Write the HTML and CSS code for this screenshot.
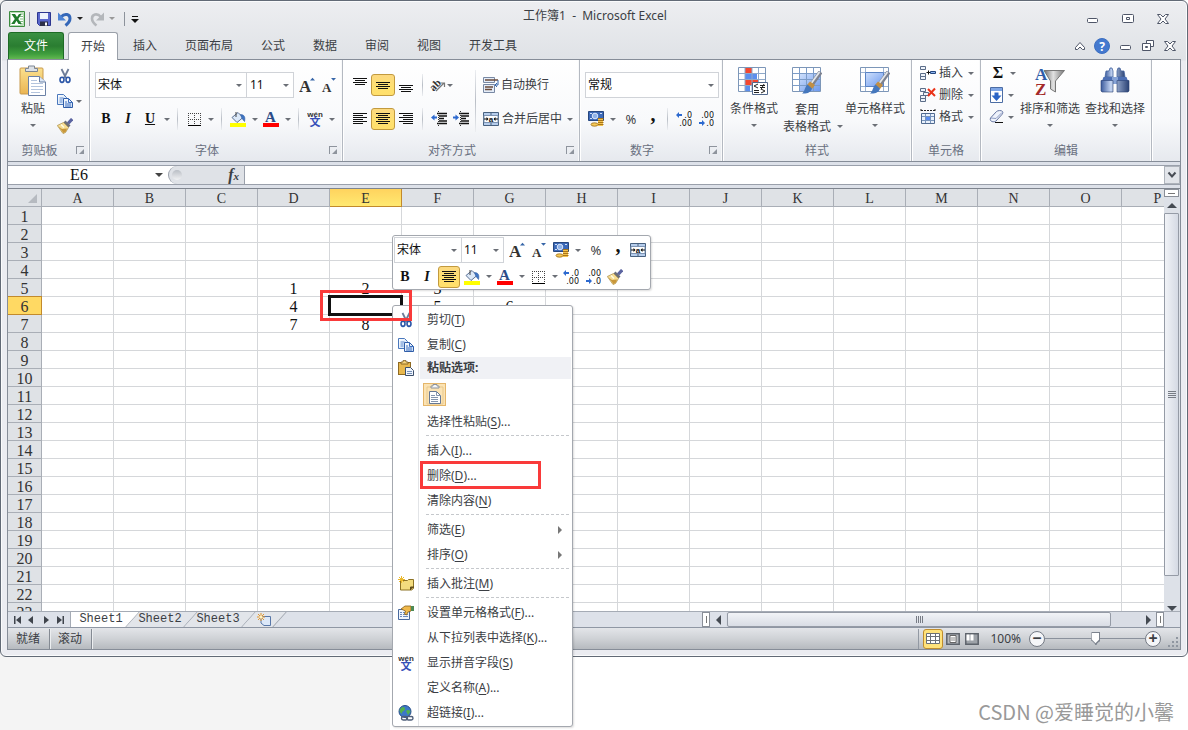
FILE: index.html
```html
<!DOCTYPE html>
<html lang="zh-CN">
<head>
<meta charset="utf-8">
<title>工作簿1 - Microsoft Excel</title>
<meta name="viewport" content="width=device-width, initial-scale=1">
<link rel="stylesheet" href="styles.css">
</head>
<body>
<svg class="defs" aria-hidden="true">
  <defs>
    <linearGradient id="gold" x2="0" y2="1"><stop stop-color="#fbe08d"/><stop offset="1" stop-color="#eab553"/></linearGradient>
    <linearGradient id="page" x2="1" y2="1"><stop stop-color="#fff"/><stop offset="1" stop-color="#c9dcf3"/></linearGradient>
    <linearGradient id="blue" x2="1" y2="1"><stop stop-color="#cfe0fb"/><stop offset="1" stop-color="#6d9af0"/></linearGradient>
    <linearGradient id="steel" x2="1" y2="0"><stop stop-color="#3a5a9c"/><stop offset=".35" stop-color="#c3d4f2"/><stop offset="1" stop-color="#2a4274"/></linearGradient>
    <linearGradient id="funnel" x2="1" y2="0"><stop stop-color="#6d6d6d"/><stop offset=".45" stop-color="#e2e2e2"/><stop offset="1" stop-color="#777"/></linearGradient>
    <symbol id="cut" viewBox="0 0 16 16"><path d="M4.500 1 9 10M11.500 1 7 10" stroke="#6d7c98" stroke-width="1.800" fill="none"/><ellipse cx="5" cy="11.800" rx="2" ry="2.600" fill="none" stroke="#2c57a8" stroke-width="1.600"/><ellipse cx="11" cy="11.800" rx="2" ry="2.600" fill="none" stroke="#2c57a8" stroke-width="1.600"/></symbol>
    <symbol id="copy" viewBox="0 0 16 16"><path d="M.5 1.500h6l3 3v7h-9z" fill="url(#page)" stroke="#4a78bd"/><path d="M2.500 5h4M2.500 7h3M2.500 9h3" stroke="#5c8bd0"/><path d="M6.500 5.500h5l4 4v5h-9z" fill="url(#page)" stroke="#2f5da8"/><path d="M11.500 5.500v4h4M8 9h2M8 11h6M8 13h6" stroke="#3c6fc0" fill="none"/></symbol>
    <symbol id="brush" viewBox="0 0 16 16"><path d="M15.200 1 11 5.500" stroke="#5b64a0" stroke-width="3.200"/><path d="m8.500 2.500 5 5-2 2-5-5z" fill="#6c6f78"/><path d="M6.500 4.500 11.500 9.500 8.500 14.500 6 15.500.3 7.500z" fill="#f5dc93" stroke="#a88a42" stroke-width=".7"/><path d="m1.500 8.500 5 6.500 2.500-1.500 1-3-5 .5z" fill="#c8973a"/><path d="m4 6.500 3 3" stroke="#fffbe4" stroke-width="1.500"/></symbol>
    <symbol id="clip" viewBox="0 0 28 32"><rect x="1" y="3" width="23" height="26" rx="1" fill="url(#gold)" stroke="#c99a4c"/><path d="M6.500 6.500V3.500h3V1h6v2.500h3v3z" fill="#dce1e7" stroke="#7d8692"/><path d="M9.500 11.500h11l6 5.500v13.500h-17z" fill="#fff" stroke="#6b81a6"/><path d="M20.500 11.500V17h6" fill="#dce7f5" stroke="#6b81a6"/><path d="M12 18.500h12M12 21.500h12M12 24.500h12M12 27.500h9M12 15.500h6" stroke="#b3c4dd"/></symbol>
    <symbol id="clip16" viewBox="0 0 16 16"><rect x=".5" y="2.500" width="12" height="12" fill="#e8b84e" stroke="#8f6a22"/><path d="M3 4V2h2V.6h3V2h2v2z" fill="#f5d37a" stroke="#76571a" stroke-width=".8"/><path d="M7.500 7.500h5l3 3v5h-8z" fill="#eef4fc" stroke="#3d4f6b"/><path d="M9 11.500h5M9 13.500h5" stroke="#7690b8"/></symbol>
    <symbol id="grow" viewBox="0 0 16 16"><text x="0" y="15" class="serif-a">A</text><path d="M11 3.500h5L13.500.8z" fill="#3766a8"/></symbol>
    <symbol id="shrink" viewBox="0 0 16 16"><text x="1" y="15" class="serif-a small">A</text><path d="M10 1h5l-2.500 2.800z" fill="#3766a8"/></symbol>
    <symbol id="border" viewBox="0 0 16 16"><path d="M2.500 2v11M8.500 2v11M14.500 2v11M2 2.500h13M2 8.500h13" stroke="#444" stroke-dasharray="1 1"/><path d="M2 14.500h13" stroke="#000"/></symbol>
    <symbol id="fill" viewBox="0 0 16 16"><path d="m2 6.500 6-5 5 5-6 5z" fill="#dbe8f8" stroke="#5a7094"/><path d="M6 1v5" stroke="#444"/><path d="M10.500 3.500c4 0 5 3 4 7l-2.500-3z" fill="#3f74c2" stroke="#2e5ca5" stroke-width=".6"/><path d="M0 12h16v4H0z" fill="#ff0"/></symbol>
    <symbol id="color" viewBox="0 0 16 16"><text x="2" y="11" class="serif-a blue">A</text><path d="M0 12h16v4H0z" fill="#f00"/></symbol>
    <symbol id="wen" viewBox="0 0 16 16"><text x="8" y="6" text-anchor="middle" class="wen-top">wén</text><text x="8" y="15" text-anchor="middle" class="wen-bottom">文</text></symbol>
    <symbol id="al" viewBox="0 0 16 16"><path d="M1 2.500h14M1 4.500h10M1 6.500h14M1 8.500h10M1 10.500h14M1 12.500h10" stroke="#111"/></symbol>
    <symbol id="ac" viewBox="0 0 16 16"><path d="M1 2.500h14M3 4.500h10M1 6.500h14M3 8.500h10M1 10.500h14M3 12.500h10" stroke="#111"/></symbol>
    <symbol id="ar" viewBox="0 0 16 16"><path d="M1 2.500h14M5 4.500h10M1 6.500h14M5 8.500h10M1 10.500h14M5 12.500h10" stroke="#111"/></symbol>
    <symbol id="at" viewBox="0 0 16 16"><path d="M1 1.500h14M3 3.500h10M1 5.500h14M3 7.500h10" stroke="#111"/></symbol>
    <symbol id="am" viewBox="0 0 16 16"><path d="M1 5.500h14M3 7.500h10M1 9.500h14M3 11.500h10" stroke="#111"/></symbol>
    <symbol id="ab" viewBox="0 0 16 16"><path d="M1 8.500h14M3 10.500h10M1 12.500h14M3 14.500h10" stroke="#111"/></symbol>
    <symbol id="orient" viewBox="0 0 16 16"><text x="0" y="12" transform="rotate(-45 5 9)" class="orient-ab">ab</text><path d="m6 14 8-8M10.500 6h4v4" stroke="#777" fill="none" stroke-width="1.200"/></symbol>
    <symbol id="outdent" viewBox="0 0 16 16"><path d="M6 2.500h10M8 5h8M8 7.500h5M8 10h8M6 12.500h10" stroke="#111" stroke-width="1.300"/><path d="M7.500 0v16" stroke="#333" stroke-dasharray="1 1"/><path d="M0 6.500 3.500 3.500v2H6v2H3.500v2z" fill="#2c69cf"/></symbol>
    <symbol id="indent" viewBox="0 0 16 16"><path d="M6 2.500h10M8 5h8M8 7.500h5M8 10h8M6 12.500h10" stroke="#111" stroke-width="1.300"/><path d="M7.500 0v16" stroke="#333" stroke-dasharray="1 1"/><path d="M6 6.500 2.500 3.500v2H0v2h2.500v2z" fill="#2c69cf"/></symbol>
    <symbol id="wrap" viewBox="0 0 16 16"><path d="M.5.500h11v5H.500zM.5 7.500h11v8H.500z" fill="#e4edf9" stroke="#7888a3"/><path d="M2 3h13M2 10h8M2 12.500h7" stroke="#6b4b3b" stroke-width="1.300"/><path d="M15 3v5h-3M14 6l-2 2 2 2" stroke="#3767ad" fill="none"/></symbol>
    <symbol id="merge" viewBox="0 0 16 16"><path d="M.5 1.500h15v13H.500z" fill="#b6cdec" stroke="#47607f"/><path d="M8 1v3M8 12v3" stroke="#47607f"/><path d="M1 4.500h14v7H1z" fill="#fff" stroke="#7d94b4"/><text x="8" y="10.500" text-anchor="middle" class="merge-a">a</text><path d="M1 8h4M11 8h4" stroke="#111"/><path d="m5.500 8-2-2v4zM10.500 8l2-2v4z" fill="#111"/></symbol>
    <symbol id="money" viewBox="0 0 16 16"><path d="M.5.500h15v9H.500z" fill="#3c69b8" stroke="#27477f"/><circle cx="7" cy="5" r="2.800" fill="#8fb2e8" stroke="#dbe7fa"/><path d="M2 2.500h2M12 2.500h2M2 7.500h2" stroke="#cfdff7"/><path d="M10 7h5v8h-5z" fill="#f4c44e"/><path d="M10 7.500h5.500M10 9.500h5.500M10 11.500h5.500M10 13.500h5.500" stroke="#a8751a"/><ellipse cx="6.500" cy="13.500" rx="3.500" ry="1.700" fill="#f5c958" stroke="#9c6b12" stroke-width=".8"/></symbol>
    <symbol id="dinc" viewBox="0 0 16 16"><text x="16" y="7" text-anchor="end" class="dec">.0</text><text x="16" y="15" text-anchor="end" class="dec">.00</text><path d="m0 4 3-3v2h3v2H3v2z" fill="#2c69cf"/></symbol>
    <symbol id="ddec" viewBox="0 0 16 16"><text x="16" y="7" text-anchor="end" class="dec">.00</text><text x="16" y="15" text-anchor="end" class="dec">.0</text><path d="m7 12-3-3v2H1v2h3v2z" fill="#2c69cf"/></symbol>
    <symbol id="paintbrush" viewBox="0 0 20 24"><path d="M18.500 1 10 13" stroke="#7d8290" stroke-width="4.500"/><path d="m17.500 1-8 11" stroke="#e4e7eb" stroke-width="1.800"/><path d="m8 10.500 5 3.500-3 4-5-4z" fill="#c28f45"/><path d="M5.500 13.500 10 17.500c-1 4-5 5.500-10 5 3-2 2.500-6.500 5.500-9z" fill="#4577bd"/></symbol>
  </defs>
</svg>

<div class="window">
  <header class="titlebar">
    <div class="quick">
      <svg class="i16" viewBox="0 0 16 16"><path d="M.5.500h15v15H.500z" fill="#fff" stroke="#3c8c3f"/><path d="M1.500 1.500h13v13h-13z" fill="none" stroke="#b6dab4"/><path d="M11 3h3M11 5.500h3M11 8h3M11 10.500h3M11 13h3" stroke="#7fb981"/><path d="M2.500 3H6l2 3 2-3h2.500L9.300 8l3.500 5H9.500L7.500 9.800 5.500 13H2.200l3.600-5z" fill="#1f7a2b"/></svg>
      <span class="qsep"></span>
      <button class="q save" aria-label="保存"><svg class="i16" viewBox="0 0 16 16"><path d="M1.500 1.500h13v13h-11l-2-2z" fill="#5a67cc" stroke="#2c3690"/><path d="M4 2h8v6H4z" fill="#eef3fc"/><path d="M4 10.500h8V15H4z" fill="#2d3048"/><path d="M9 11.500h2v3H9z" fill="#fff"/></svg></button>
      <button class="q dd" aria-label="撤消"><svg class="i16" viewBox="0 0 16 16"><path d="M4 6c4-4.500 9-2.500 9 1.500 0 3-2 5-4.500 7" stroke="#3467b8" stroke-width="3" fill="none"/><path d="M1 1.500v8h8z" fill="#4d83d4"/></svg></button>
      <button class="q dd dim" aria-label="恢复"><svg class="i16" viewBox="0 0 16 16"><path d="M12 6c-4-4.500-9-2.500-9 1.500 0 3 2 5 4.500 7" stroke="#b4b7bb" stroke-width="2.600" fill="none"/><path d="M15 1.500v8H7z" fill="#b4b7bb"/></svg></button>
      <span class="qsep"></span>
      <button class="q narrow" aria-label="自定义快速访问工具栏"><svg width="8" height="8" viewBox="0 0 8 8"><path d="M1 1.500h6" stroke="#111"/><path d="M0 4h8L4 8z" fill="#111"/></svg></button>
    </div>
    <h1>工作簿1&nbsp; -&nbsp; Microsoft Excel</h1>
    <div class="winctl">
      <button aria-label="最小化"><svg width="12" height="12" viewBox="0 0 12 12"><rect x=".5" y="5.500" width="10" height="4" rx="1" class="ctl"/></svg></button>
      <button aria-label="最大化"><svg width="12" height="12" viewBox="0 0 12 12"><rect x=".5" y="1.500" width="11" height="8" rx="1" class="ctl"/><path d="M4.500 4.500h3v2h-3z" class="ctl"/></svg></button>
      <button aria-label="关闭"><svg width="12" height="12" viewBox="0 0 12 12"><path d="M.5 1.500h3L6 4l2.500-2.500h3L8 6l3.500 4.500h-3L6 8l-2.500 2.500h-3L4 6z" class="ctl"/></svg></button>
    </div>
  </header>

  <nav class="tabs">
    <button class="tab file">文件</button>
    <button class="tab active">开始</button>
    <button class="tab">插入</button>
    <button class="tab">页面布局</button>
    <button class="tab">公式</button>
    <button class="tab">数据</button>
    <button class="tab">审阅</button>
    <button class="tab">视图</button>
    <button class="tab">开发工具</button>
    <div class="bookctl">
      <button aria-label="功能区最小化"><svg width="10" height="12" viewBox="0 0 10 12"><path d="M.5 7.500 5 2.500l4.500 5v2h-2L5 7 2.500 9.500h-2z" class="ctl"/></svg></button>
      <button aria-label="帮助"><svg width="16" height="16" viewBox="0 0 16 16"><circle cx="8" cy="8" r="7.500" fill="#4479cf" stroke="#3c6fc0"/><text x="8" y="12.500" text-anchor="middle" class="help">?</text></svg></button>
      <button aria-label="最小化工作簿"><svg width="12" height="12" viewBox="0 0 12 12"><rect x=".5" y="5.500" width="10" height="4" rx="1" class="ctl"/></svg></button>
      <button aria-label="还原工作簿"><svg width="12" height="12" viewBox="0 0 12 12"><path d="M4.500.500h7v6h-7z" class="ctl"/><path d="M.5 3.500h8v7h-8z" class="ctl"/><path d="M3.500 6.500h2v1h-2z" class="ctl"/></svg></button>
      <button aria-label="关闭工作簿"><svg width="12" height="12" viewBox="0 0 12 12"><path d="M.5 1.500h3L6 4l2.500-2.500h3L8 6l3.500 4.500h-3L6 8l-2.500 2.500h-3L4 6z" class="ctl"/></svg></button>
    </div>
  </nav>

  <main class="workbench">
    <div class="ribbon">
      <section class="group g-clip">
        <div class="tools">
          <button class="big"><svg width="28" height="32"><use href="#clip"/></svg><span>粘贴</span><i class="arrow"></i></button>
          <div class="stack clipcol">
            <button class="tb" aria-label="剪切"><svg class="i16"><use href="#cut"/></svg></button>
            <button class="tb dd" aria-label="复制"><svg class="i16"><use href="#copy"/></svg></button>
            <button class="tb" aria-label="格式刷"><svg class="i16"><use href="#brush"/></svg></button>
          </div>
        </div>
        <h2>剪贴板</h2><button class="launcher" aria-label="剪贴板选项"></button>
      </section>

      <section class="group g-font">
        <div class="tools rows">
          <div class="row">
            <span class="pick wide"><select aria-label="字体"><option>宋体</option></select></span>
            <span class="pick size"><select aria-label="字号"><option>11</option></select></span>
            <button class="tb" aria-label="增大字号"><svg class="i16"><use href="#grow"/></svg></button>
            <button class="tb" aria-label="减小字号"><svg class="i16"><use href="#shrink"/></svg></button>
          </div>
          <div class="row">
            <button class="tb b">B</button><button class="tb it">I</button><button class="tb b dd"><u>U</u></button>
            <span class="sep"></span>
            <button class="tb dd" aria-label="边框"><svg class="i16"><use href="#border"/></svg></button>
            <span class="sep"></span>
            <button class="tb dd" aria-label="填充颜色"><svg class="i16"><use href="#fill"/></svg></button>
            <button class="tb dd" aria-label="字体颜色"><svg class="i16"><use href="#color"/></svg></button>
            <span class="sep"></span>
            <button class="tb dd" aria-label="拼音"><svg class="i16"><use href="#wen"/></svg></button>
          </div>
        </div>
        <h2>字体</h2><button class="launcher" aria-label="字体选项"></button>
      </section>

      <section class="group g-align">
        <div class="tools">
          <div class="rows">
            <div class="row">
              <button class="tb" aria-label="顶端对齐"><svg class="i16"><use href="#at"/></svg></button>
              <button class="tb on" aria-label="垂直居中"><svg class="i16"><use href="#am"/></svg></button>
              <button class="tb" aria-label="底端对齐"><svg class="i16"><use href="#ab"/></svg></button>
              <span class="sep"></span>
              <button class="tb dd snug" aria-label="方向"><svg class="i16"><use href="#orient"/></svg></button>
            </div>
            <div class="row">
              <button class="tb" aria-label="左对齐"><svg class="i16"><use href="#al"/></svg></button>
              <button class="tb on" aria-label="居中"><svg class="i16"><use href="#ac"/></svg></button>
              <button class="tb" aria-label="右对齐"><svg class="i16"><use href="#ar"/></svg></button>
              <span class="sep"></span>
              <button class="tb" aria-label="减少缩进"><svg class="i16"><use href="#outdent"/></svg></button>
              <button class="tb" aria-label="增加缩进"><svg class="i16"><use href="#indent"/></svg></button>
            </div>
          </div>
          <span class="sep tall"></span>
          <div class="rows">
            <div class="row"><button class="tb text"><svg class="i16"><use href="#wrap"/></svg>自动换行</button></div>
            <div class="row"><button class="tb text dd"><svg class="i16"><use href="#merge"/></svg>合并后居中</button></div>
          </div>
        </div>
        <h2>对齐方式</h2><button class="launcher" aria-label="对齐选项"></button>
      </section>

      <section class="group g-num">
        <div class="tools rows">
          <div class="row"><span class="pick full"><select aria-label="数字格式"><option>常规</option></select></span></div>
          <div class="row">
            <button class="tb dd" aria-label="会计数字格式"><svg class="i16"><use href="#money"/></svg></button>
            <button class="tb pct">%</button><button class="tb comma">,</button>
            <span class="sep"></span>
            <button class="tb" aria-label="增加小数位数"><svg class="i16"><use href="#dinc"/></svg></button>
            <button class="tb" aria-label="减少小数位数"><svg class="i16"><use href="#ddec"/></svg></button>
          </div>
        </div>
        <h2>数字</h2><button class="launcher" aria-label="数字选项"></button>
      </section>

      <section class="group g-style">
        <div class="tools">
          <button class="big"><svg width="32" height="32" viewBox="0 0 32 32"><path d="M.5 2.500h27v24h-27z" fill="#fff" stroke="#7c96b8"/><path d="M7 3h7v5H7z" fill="#f4472f"/><path d="M7 9h12v5H7z" fill="#5c8fee"/><path d="M7 15h13v5H7z" fill="#f4472f"/><path d="M7 21h5v5H7z" fill="#5c8fee"/><path d="M1 8.500h26M1 14.500h26M1 20.500h26M7 3v23M14 3v23M20.500 3v23" stroke="#8fa9c9" fill="none"/><path d="M14.500 17.500h15v12h-15z" fill="#fff" stroke="#51678a"/><path d="m20 19-4 2 4 2M22 20.500h5M22 22.500h5M26 19l-3 5.500M16 25.500h5M16 27.500h5M23 24l4 2-4 2" stroke="#222" fill="none"/></svg><span>条件格式</span><i class="arrow"></i></button>
          <button class="big"><svg width="32" height="32" viewBox="0 0 32 32"><path d="M1.500 2.500h28v24h-28z" fill="#fff" stroke="#7c96b8"/><path d="M8 9h21v17H8z" fill="url(#blue)"/><path d="M2 8.500h27M2 14.500h27M2 20.500h27M8.500 3v23M15.500 3v23M22.500 3v23" stroke="#7c9cc8" fill="none"/><use href="#paintbrush" x="11" y="6" width="20" height="24"/></svg><span>套用<br>表格格式<i class="arrow side"></i></span></button>
          <button class="big"><svg width="32" height="32" viewBox="0 0 32 32"><path d="M1.500 2.500h28v24h-28z" fill="#fff" stroke="#7c96b8"/><path d="M2 7.500h27M2 21.500h27M6.500 3v23M24.500 3v23" stroke="#9db4d2" fill="none"/><path d="M6.500 7.500h18v14h-18z" fill="url(#blue)" stroke="#5a83c4"/><use href="#paintbrush" x="11" y="6" width="20" height="24"/></svg><span>单元格样式</span><i class="arrow"></i></button>
        </div>
        <h2>样式</h2>
      </section>

      <section class="group g-cells">
        <div class="tools stack">
          <button class="tb text dd"><svg class="i16" viewBox="0 0 16 16"><path d="M.5 1.500h5v3h-5zM.5 8.500h5v3h-5zM.5 11.500h5v3h-5z" fill="#eef3fa" stroke="#5b6d88"/><path d="M6.500 7.500h4M8.500 5.500v4" stroke="#111"/><path d="M10.500 6.500h5v2h-5z" fill="#8fb7f3" stroke="#24467d"/></svg>插入</button>
          <button class="tb text dd"><svg class="i16" viewBox="0 0 16 16"><path d="M.5 1.500h5v3h-5zM.5 8.500h5v3h-5zM.5 11.500h5v3h-5zM3.500 5.500h5v3h-5z" fill="#eef3fa" stroke="#5b6d88"/><path d="m8 2 7 7M15 1.500 8 9" stroke="#ea3319" stroke-width="2"/></svg>删除</button>
          <button class="tb text dd"><svg class="i16" viewBox="0 0 16 16"><path d="M1 1.500h14M1 0v3M15 0v3" stroke="#222" stroke-dasharray="2 1"/><path d="M1.500 4.500h13v10h-13z" fill="#e9f1fc" stroke="#506a90"/><path d="M5.500 5v9M10.500 5v9M2 7.500h12M2 11.500h12" stroke="#7894bb"/><path d="M6 8h4v3H6z" fill="#5b8df0"/></svg>格式</button>
        </div>
        <h2>单元格</h2>
      </section>

      <section class="group g-edit">
        <div class="tools">
          <div class="stack">
            <button class="tb dd sigma"><span>Σ</span></button>
            <button class="tb dd" aria-label="填充"><svg class="i16" viewBox="0 0 16 16"><path d="M1.500.500h12v15h-12z" fill="#fff" stroke="#4c6da4"/><path d="M2 1h11v3H2z" fill="#7fa6e6"/><path d="M5.500 5.500h4v3h3l-5 5.500-5-5.500h3z" fill="#2a64c6"/></svg></button>
            <button class="tb dd" aria-label="清除"><svg class="i16" viewBox="0 0 16 16"><path d="m1.500 9 6-6.500c1-1 5-1.500 6 0 .8 1 0 2.500-1 3.500L7 12c-1.500 1.500-7 1-5.500-3z" fill="#eef2fb" stroke="#6474a0"/><path d="m2 9 5 .5 6-6" stroke="#8d9cc4" fill="none"/><path d="M6 13.500h8" stroke="#111"/></svg></button>
          </div>
          <button class="big"><svg width="32" height="32" viewBox="0 0 32 32"><text x="1" y="15" class="az a">A</text><text x="1" y="30" class="az z">Z</text><path d="M10 5.500h20.500L21.500 16v11l-5-3v-8z" fill="url(#funnel)" stroke="#777"/></svg><span>排序和筛选</span><i class="arrow"></i></button>
          <button class="big"><svg width="32" height="32" viewBox="0 0 32 32"><path d="M7 6h3l1-3h2l1 3v6H6zM18 6l1-3h2l1 3h3l1 6h-8z" fill="url(#steel)" stroke="#4564a0" stroke-width=".8"/><path d="M4.500 12h9l.5 4H3zM18.500 12h9l1.500 4H18z" fill="#4d6fb4"/><path d="M13 12h6v7h-6z" fill="#86a3d6"/><path d="M2 15.500h12v11.500H3l-1-1zM18 15.500h12V26l-1 1H18z" fill="url(#steel)" stroke="#2a4274" stroke-width=".6"/></svg><span>查找和选择</span><i class="arrow"></i></button>
        </div>
        <h2>编辑</h2>
      </section>
    </div>

    <div class="formula">
      <input class="namebox" aria-label="名称框" value="E6"><button class="nbdrop" aria-label="名称列表"><i class="arrow dark"></i></button>
      <div class="fxarea"><span class="knob"></span><button class="fx" aria-label="插入函数">f<sub>x</sub></button></div>
      <input class="finput" aria-label="编辑栏">
      <button class="expand" aria-label="展开编辑栏"><svg width="10" height="8" viewBox="0 0 10 8"><path d="m1.500 1.500 3.500 4 3.500-4" stroke="#484d55" stroke-width="2" fill="none"/></svg></button>
    </div>

    <div class="sheet">
      <div class="viewport"><table class="grid" id="grid"></table></div>
      <div class="vscroll">
        <span class="split"></span>
        <button aria-label="向上滚动"><i class="tri up"></i></button>
        <div class="vthumb"></div>
        <button class="down" aria-label="向下滚动"><i class="tri down"></i></button>
      </div>
    </div>

    <div class="sheetbar">
      <div class="sheetnav">
        <button aria-label="第一张"><svg width="7" height="8"><path d="M0 0h1.500v8H0zM7 0v8L2 4z"/></svg></button>
        <button aria-label="上一张"><svg width="7" height="8"><path d="M5 0v8L0 4z"/></svg></button>
        <button aria-label="下一张"><svg width="7" height="8"><path d="M1 0v8l5-4z"/></svg></button>
        <button aria-label="最后一张"><svg width="7" height="8"><path d="M0 0v8l5-4zM5.500 0H7v8H5.500z"/></svg></button>
      </div>
      <div class="sheettabs">
        <button class="st cur"><span>Sheet1</span></button>
        <button class="st"><span>Sheet2</span></button>
        <button class="st"><span>Sheet3</span></button>
        <button class="st new" aria-label="插入工作表"><svg width="16" height="14" viewBox="0 0 16 14"><path d="M5 3.500h9.500v9H8L5 10z" fill="#dce8f8" stroke="#5877a8"/><path d="M5 0v8M1 4h8M2 1l6 6M8 1 2 7" stroke="#e3962b"/><circle cx="5" cy="4" r="1.500" fill="#fff2c4"/></svg></button>
      </div>
      <div class="hscroll">
        <span class="hsplit"></span>
        <button aria-label="向左滚动"><i class="tri left"></i></button>
        <div class="htrack"><div class="hthumb"></div></div>
        <button aria-label="向右滚动"><i class="tri right"></i></button>
        <span class="hsplit"></span>
      </div>
    </div>

    <footer class="status">
      <span class="cellmode">就绪</span><span class="cellmode">滚动</span>
      <div class="views">
        <button class="on" aria-label="普通"><svg width="14" height="12" viewBox="0 0 14 12"><path d="M.5.500h13v10H.500zM1 3.500h12M1 7.500h12M4.500 1v9M9.500 1v9" fill="#fff" stroke="#6b6f75"/></svg></button>
        <button aria-label="页面布局视图"><svg width="14" height="12" viewBox="0 0 14 12"><path d="M.8.800h12.400v10.400H.800z" fill="#b5b9be" stroke="#5d636b" stroke-width="1.500"/><path d="M4 2.500h6v7H4z" fill="#fff" stroke="#666"/><path d="M5 5h4M5 7h4" stroke="#888"/></svg></button>
        <button aria-label="分页预览"><svg width="14" height="12" viewBox="0 0 14 12"><path d="M.8.800h12.400v10.400H.800z" fill="#9da2a8" stroke="#5d636b" stroke-width="1.500"/><path d="M1.500 1.500h3v6h-3zM5.500 1.500h3v6h-3z" fill="#fff"/></svg></button>
      </div>
      <button class="zoom">100%</button>
      <button class="round" aria-label="缩小">−</button>
      <input type="range" class="slider" aria-label="显示比例" min="0" max="200" value="102">
      <button class="round" aria-label="放大">+</button>
      <svg class="grip" width="14" height="14" viewBox="0 0 14 14"><path d="M10 2h2v2h-2zM6 6h2v2H6zM10 6h2v2h-2zM2 10h2v2H2zM6 10h2v2H6zM10 10h2v2h-2z" fill="#8f96a0"/></svg>
    </footer>
  </main>
</div>

<div class="mini" role="toolbar" aria-label="浮动工具栏">
  <div class="row">
    <span class="pick mfont"><select aria-label="浮动字体"><option>宋体</option></select></span>
    <span class="pick msize"><select aria-label="浮动字号"><option>11</option></select></span>
    <button class="tb" aria-label="增大字号"><svg class="i16"><use href="#grow"/></svg></button>
    <button class="tb" aria-label="减小字号"><svg class="i16"><use href="#shrink"/></svg></button>
    <button class="tb dd" aria-label="会计数字格式"><svg class="i16"><use href="#money"/></svg></button>
    <button class="tb pct">%</button><button class="tb comma">,</button>
    <button class="tb" aria-label="合并后居中"><svg class="i16"><use href="#merge"/></svg></button>
  </div>
  <div class="row">
    <button class="tb b">B</button><button class="tb it">I</button>
    <button class="tb on" aria-label="居中"><svg class="i16"><use href="#ac"/></svg></button>
    <button class="tb dd" aria-label="填充颜色"><svg class="i16"><use href="#fill"/></svg></button>
    <button class="tb dd" aria-label="字体颜色"><svg class="i16"><use href="#color"/></svg></button>
    <button class="tb dd" aria-label="边框"><svg class="i16"><use href="#border"/></svg></button>
    <button class="tb" aria-label="增加小数位数"><svg class="i16"><use href="#dinc"/></svg></button>
    <button class="tb" aria-label="减少小数位数"><svg class="i16"><use href="#ddec"/></svg></button>
    <button class="tb" aria-label="格式刷"><svg class="i16"><use href="#brush"/></svg></button>
  </div>
</div>

<div class="menu" role="menu">
  <button role="menuitem"><svg class="i16"><use href="#cut"/></svg><span>剪切(<u>T</u>)</span></button>
  <button role="menuitem"><svg class="i16"><use href="#copy"/></svg><span>复制(<u>C</u>)</span></button>
  <div class="mhead"><svg class="i16"><use href="#clip16"/></svg><span>粘贴选项:</span></div>
  <div class="pasteopts"><button aria-label="粘贴"><svg width="18" height="22" viewBox="0 0 18 22"><path d="M1 3h16v17H1z" fill="#fbe3b4" stroke="#e9c98d"/><path d="M5 4V2h2V.5h4V2h2v2z" fill="#f4f6f8" stroke="#8d939b"/><path d="M3.500 7.500h7l4 4v8h-11z" fill="#fff" stroke="#667894"/><path d="M10.500 7.500v4h4M5 13.500h7M5 15.500h7M5 17.500h7M5 11.500h4" stroke="#8494ad" fill="none"/></svg></button></div>
  <button role="menuitem"><i></i><span>选择性粘贴(<u>S</u>)...</span></button>
  <hr>
  <button role="menuitem"><i></i><span>插入(<u>I</u>)...</span></button>
  <button role="menuitem" class="marked"><i></i><span>删除(<u>D</u>)...</span></button>
  <button role="menuitem"><i></i><span>清除内容(<u>N</u>)</span></button>
  <hr>
  <button role="menuitem" class="sub"><i></i><span>筛选(<u>E</u>)</span></button>
  <button role="menuitem" class="sub"><i></i><span>排序(<u>O</u>)</span></button>
  <hr>
  <button role="menuitem"><svg class="i16" viewBox="0 0 16 16"><path d="M2.500 4.500h7l1-1h5v9l-2 1.500h-11z" fill="#f3dc7e" stroke="#8c7224"/><path d="M12.500 14v-3H16" fill="#6b5620" stroke="#5b4818"/><path d="M3.500 0v7M0 3.500h7M1 1l5 5M6 1 1 6" stroke="#eab82c"/></svg><span>插入批注(<u>M</u>)</span></button>
  <hr>
  <button role="menuitem"><svg class="i16" viewBox="0 0 16 16"><path d="M.5 4.500h11v10H.500z" fill="#f0f5fc" stroke="#48699e"/><path d="M2 7.500h2M5 7.500h5M2 9.500h2M5 9.500h5M2 11.500h2M5 11.500h5" stroke="#6a89bb"/><path d="m3 4 4-3h6v5l-3 1-1.500 3-2-1 1-3z" fill="#f0b94b" stroke="#85601d" stroke-width=".8"/><path d="M13 1h3v5h-3z" fill="#4d8a55"/></svg><span>设置单元格格式(<u>F</u>)...</span></button>
  <button role="menuitem"><i></i><span>从下拉列表中选择(<u>K</u>)...</span></button>
  <button role="menuitem"><svg class="i16"><use href="#wen"/></svg><span>显示拼音字段(<u>S</u>)</span></button>
  <button role="menuitem"><i></i><span>定义名称(<u>A</u>)...</span></button>
  <button role="menuitem"><svg class="i16" viewBox="0 0 16 16"><circle cx="7" cy="6.500" r="6" fill="#3c78c8" stroke="#274f88"/><path d="M3 3c2-2 4-1 4 1S4 6 4 8 1.500 7 1.500 5zM8 6c2-2 4-1 4.500.500L10 10z" fill="#53b14e"/><rect x="3.500" y="11.500" width="6" height="3.500" rx="1.700" fill="none" stroke="#4f5f7a" stroke-width="1.400"/><rect x="8.500" y="11.500" width="6.500" height="3.500" rx="1.700" fill="none" stroke="#4f5f7a" stroke-width="1.400"/></svg><span>超链接(<u>I</u>)...</span></button>
</div>
<div class="callout"></div>
<p class="watermark">CSDN @爱睡觉的小馨</p>
<script src="grid.js"></script>
</body>
</html>
```
FILE: styles.css
```css
*, *::before, *::after { box-sizing: border-box; }
body {
  margin: 0; min-height: 100vh; position: relative; overflow: hidden;
  font: 12px/16px "Noto Sans", "Noto Sans CJK SC", sans-serif; color: #3b3e44;
  background: linear-gradient(#f4f4f4, #f4f4f4) no-repeat 0 0 / 390px 100% #fff;
}
button, select, input { font: inherit; color: inherit; border: 0; background: none; padding: 0; margin: 0; border-radius: 0; }
h1, h2, p { margin: 0; font-weight: 400; font-size: 12px; }
svg { display: block; flex: none; }
.defs { position: absolute; width: 0; height: 0; }
.i16 { width: 16px; height: 16px; }
.ctl { fill: #fff; stroke: #4f5668; }
.serif-a { font: bold 17px "Liberation Serif", serif; fill: #333; }
.serif-a.small { font-size: 13px; }
.serif-a.blue { font-size: 15px; fill: #2b4d88; }
.wen-top { font: bold 8px "Liberation Sans", sans-serif; fill: #333; }
.wen-bottom { font: bold 11px "Noto Sans CJK SC", sans-serif; fill: #3650b8; }
.orient-ab { font: bold 11px "Liberation Serif", serif; fill: #333; }
.merge-a { font: bold 8px "Liberation Sans", sans-serif; fill: #111; }
.dec { font: 8px "DejaVu Sans", sans-serif; fill: #111; }
.az { font: bold 17px "Liberation Serif", serif; }
.az.a { fill: #2f5da8; }
.az.z { fill: #a32a2a; }
.help { font: bold 12px "Noto Sans", sans-serif; fill: #fff; }

.window {
  height: calc(100vh - 73px); display: flex; flex-direction: column;
  padding: 0 6px 6px; border: 1px solid #626a76; border-radius: 6px;
  background: linear-gradient(#edeef1, #dfe2e6 59px, #ebecf1 60px);
  box-shadow: inset 0 0 0 1px #fafbfc;
}
.titlebar { height: 31px; display: grid; grid-template-columns: 1fr auto 1fr; align-items: center; padding: 4px 0 0 2px; }
.titlebar h1 { padding-bottom: 5px; }
.quick { display: flex; align-items: center; }
.qsep { width: 1px; height: 14px; background: #8c929b; margin: 0 5px 0 4px; }
.q { width: 20px; height: 18px; display: flex; align-items: center; gap: 4px; padding: 0 1px; }
.q.dd { width: 32px; }
.q.save { width: 21px; }
.q.narrow { width: 14px; }
.dd::after, .arrow {
  content: ""; width: 0; height: 0; flex: none;
  border: solid transparent; border-width: 3px 3px 0; border-top-color: #6b6f76;
}
.q.dd::after { border-top-color: #222; }
.q.dim::after { border-top-color: #999; }
.winctl { display: flex; justify-content: flex-end; gap: 23px; padding: 0 12px 0 0; }

.tabs { height: 27px; flex: none; display: flex; align-items: flex-end; padding-left: 1px; }
.tab { height: 27px; padding: 0 14px; line-height: 26px; }
.tab.file { width: 56px; margin-right: 4px; color: #fff; border: 1px solid #1d6b25; border-bottom: 0; border-radius: 3px 3px 0 0; background: linear-gradient(#3b9143, #2a7d31 50%, #3e9d3c 80%, #62b851); }
.tab.active { width: 50px; height: 28px; padding: 0 12px; margin: 0 1px -1px 0; border: 1px solid #9aa0a9; border-bottom: 0; border-radius: 3px 3px 0 0; background: #fff; position: relative; }
.bookctl { margin-left: auto; height: 26px; display: flex; align-items: center; gap: 10px; padding-right: 5px; }
.bookctl button:nth-child(1) { margin-right: -1px; }

.workbench { flex: 1; min-height: 0; display: flex; flex-direction: column; border: 1px solid #868d98; background: #dde1e9; }
.ribbon { height: 102px; flex: none; display: flex; border-bottom: 1px solid #868d98; background: linear-gradient(#fff, #f8f9fb 60%, #e6e9ee); overflow: hidden; }
.group { flex: none; position: relative; display: flex; flex-direction: column; border-right: 1px solid #b4b9c1; box-shadow: inset -1px 0 #f8f9fa, 1px 0 #fff; }
.group h2 { text-align: center; color: #697080; line-height: 20px; }
.tools { height: 81px; display: flex; flex: none; }
.launcher { position: absolute; right: 5px; bottom: 7px; width: 8px; height: 8px; border: solid #8e949d; border-width: 1px 0 0 1px; }
.launcher::after { content: ""; position: absolute; right: 0; bottom: 0; border: solid transparent; border-width: 0 0 5px 5px; border-bottom-color: #8e949d; }
.g-clip { width: 82px; }
.g-font { width: 253px; }
.g-align { width: 237px; }
.g-num { width: 143px; }
.g-style { width: 189px; }
.g-cells { width: 69px; }
.g-edit { width: 171px; }
.g-clip h2, .g-font h2, .g-align h2, .g-num h2 { padding-right: 18px; }
.rows { display: flex; flex-direction: column; padding-top: 12px; gap: 8px; }
.row { display: flex; height: 26px; align-items: center; }
.stack { display: flex; flex-direction: column; }
.tb { width: 22px; height: 22px; display: flex; align-items: center; justify-content: center; flex: none; white-space: nowrap; }
.tb.dd { width: 33px; gap: 6px; justify-content: flex-start; padding-left: 3px; }
.tb.dd.snug { gap: 1px; padding-left: 2px; width: 40px; }
.tb.text { width: auto; gap: 2px; padding: 0 3px; }
.tb.text.dd { width: auto; gap: 3px; }
.tb.text.dd::after { margin-left: 2px; }
.tb.on { width: 24px; border: 1px solid #c29a3e; border-radius: 3px; background: linear-gradient(#fcd980, #ffe070 60%, #ffdf6b); }
.tb.b, .tb.it { font: bold 14px "Liberation Serif", serif; color: #111; }
.tb.it { font-style: italic; }
.tb.b u { width: 16px; text-align: center; }
.pct { font-size: 13px; padding-left: 4px; }
.comma { font: bold 20px/12px "Liberation Serif", serif; color: #111; padding: 0 0 10px 4px; }
.sep { width: 1px; height: 22px; margin: 0 5px; background: linear-gradient(#eceef1, #b9bec6, #eceef1); flex: none; }
.sep.tall { height: 62px; margin: 10px 4px 0 3px; }
.pick { position: relative; height: 26px; border: 1px solid #d0d3d8; background: #fff; }
.pick select { width: 100%; height: 100%; padding-left: 2px; appearance: none; color: #111; display: block; line-height: 22px; }
.pick::after { content: ""; position: absolute; right: 4px; top: 11px; border: solid transparent; border-width: 3px 3px 0; border-top-color: #6b6f76; pointer-events: none; }
.wide { width: 152px; }
.size { width: 48px; margin: 0 2px 0 -1px; }
.size select { padding-left: 3px; }
.full { width: 134px; }
.g-font .tools { padding-left: 5px; }
.g-align .tools { padding-left: 6px; }
.g-num .tools { padding-left: 5px; }
.big { display: flex; flex-direction: column; align-items: center; padding-top: 5px; flex: none; }
.big > span { margin-top: 4px; line-height: 16px; white-space: nowrap; text-align: center; }
.big > .arrow { margin-top: 7px; }
.arrow.side { display: inline-block; margin: 0 -12px 3px 6px; }
.g-clip .big { width: 50px; }
.clipcol { padding-top: 5px; gap: 3px; margin-left: -2px; }
.clipcol .tb:not(.dd) { justify-content: flex-start; padding-left: 1px; }
.clipcol .tb.dd { width: 28px; padding-left: 1px; gap: 3px; }
.g-style .tools { padding-left: 7px; gap: 5px; }
.g-style .big:nth-child(2) > span { line-height: 17px; }
.g-style .big:nth-child(3) { margin-left: 9px; }
.g-cells .tools { padding: 2px 0 0 5px; }
.g-edit .tools { padding-left: 5px; }
.g-edit .stack { padding-top: 2px; width: 34px; }
.g-edit .stack .tb { gap: 3px; }
.g-edit .big { margin-right: 5px; }
.sigma { font: bold 16px "Liberation Serif", serif; color: #111; }
.tb.b.sigma, .tb.sigma { line-height: 16px; }
.sigma span { width: 18px; text-align: center; }

.formula { height: 20px; margin: 3px 0; flex: none; display: flex; border: solid #9aa0ab; border-width: 1px 0; background: #fff; }
.namebox { width: 142px; text-align: center; font: 16px "Liberation Serif", serif; color: #111; }
.nbdrop { width: 18px; display: grid; place-items: center; }
.arrow.dark { border-width: 4px 4px 0; border-top-color: #444; }
.fxarea { width: 77px; display: flex; align-items: center; justify-content: space-between; padding: 0 5px 0 3px; background: #dfe2e7; border-right: 1px solid #9aa0ab; border-left: 1px solid #9aa0ab; border-radius: 9px 0 0 9px; }
.knob { width: 10px; height: 10px; border-radius: 50%; background: linear-gradient(#b9bec5, #f1f2f4); }
.fx { font: italic bold 16px/16px "Liberation Serif", serif; }
.fx sub { font-size: 11px; line-height: 8px; vertical-align: baseline; }
.finput { flex: 1; min-width: 0; }
.expand { width: 16px; display: grid; place-items: center; background: #e2e5ea; border: 1px solid #aeb3bb; }

.sheet { flex: 1; min-height: 0; display: flex; border-top: 1px solid #7f858f; }
.viewport { flex: 1; min-width: 0; overflow: hidden; background: #fff; }
.grid { width: 1186px; table-layout: fixed; border-spacing: 0; font: 16px/15px "Liberation Serif", serif; color: #111; }
.grid th, .grid td { height: 18px; padding: 2px 0 0; text-align: center; font-weight: 400; border: solid #d5d7da; border-width: 0 1px 1px 0; position: relative; white-space: nowrap; }
.grid th { background: #dfe2e6; border-color: #a9aeb6; color: #333; }
.grid thead th { font-size: 14px; }
.grid .stub { width: 34px; }
.grid .stub.corner::after { content: ""; position: absolute; right: 4px; bottom: 3px; border-left: 9px solid transparent; border-bottom: 9px solid #b6bac0; }
.grid th.hot { background: linear-gradient(#ffd35e, #ffe971); border-color: #c28a2c; }
.grid tbody th.hot { background: #ffd963; box-shadow: 0 -1px #c28a2c; }
.grid .cursor::after { content: ""; position: absolute; inset: -2px; border: 3px solid #111; z-index: 1; }

.vscroll { width: 16px; flex: none; display: flex; flex-direction: column; background: #dde1e8; }
.vscroll button, .hscroll button { height: 16px; width: 16px; display: grid; place-items: center; flex: none; }
.split { height: 8px; margin: 0 1px 0 0; border: 1px solid #8a8f98; background: linear-gradient(#777, #777) center / 7px 1px no-repeat #fff; }
.vthumb { height: 363px; margin-right: 1px; border: 1px solid #959ba6; border-radius: 1px; background: repeating-linear-gradient(#777c85 0 1px, transparent 1px 2px) center / 8px 7px no-repeat, linear-gradient(90deg, #f1f3f7, #d5dae4); }
.vscroll .down { margin-top: auto; }
.tri { width: 0; height: 0; border: 5px solid transparent; }
.tri.up { border-top: 0; border-bottom-color: #444a52; }
.tri.down { border-bottom: 0; border-top-color: #444a52; }
.tri.left { border-left: 0; border-right-color: #444a52; }
.tri.right { border-right: 0; border-left-color: #444a52; }

.sheetbar { height: 16px; flex: none; display: flex; background: #dde1e9; border-top: 1px solid #a5abb5; }
.sheetnav { width: 63px; display: flex; align-items: center; justify-content: space-between; padding: 0 6px 0 6px; border-right: 1px solid #a5abb5; }
.sheetnav path { fill: #3f444c; }
.sheettabs { display: flex; overflow: hidden; padding-right: 14px; }
.st { position: relative; width: 58px; height: 15px; font: 12px/15px "Liberation Mono", monospace; }
.st::before { content: ""; position: absolute; inset: 0 -4px 0 4px; transform: skewX(-42deg); border: solid #9ca2ac; border-width: 0 1px 0 0; background: #e2e5ea; }
.st.cur::before { left: -20px; background: #fff; }
.st span, .st svg { position: relative; }
.st span { padding-left: 2px; }
.st.new { width: 31px; }
.st.new svg { margin-left: 11px; }
.st:nth-child(2), .st:nth-child(3) { padding-left: 2px; }
.hscroll { margin-left: auto; width: 462px; flex: none; display: flex; margin-right: 16px; }
.hsplit { width: 8px; border: 1px solid #8a8f98; background: linear-gradient(#777, #777) center / 1px 7px no-repeat #fff; }
.htrack { flex: 1; padding: 0 29px 0 1px; background: #d9dde5; }
.hthumb { height: 15px; border: 1px solid #959ba6; border-radius: 2px; background: repeating-linear-gradient(90deg, #777c85 0 1px, transparent 1px 2px) center / 7px 7px no-repeat, linear-gradient(#f1f3f7, #d9dde5); }

.status { height: 22px; flex: none; display: flex; align-items: center; border-top: 1px solid #8f97a4; background: linear-gradient(#e3e5e9, #cfd2d6 50%, #b6babf); }
.cellmode { padding: 0 9px 0 8px; line-height: 20px; border-right: 1px solid #848a93; box-shadow: 1px 0 #eceef0; }
.views { margin-left: auto; display: flex; gap: 1px; padding-left: 4px; border-left: 1px solid #9299a3; }
.views button { width: 18px; height: 20px; display: grid; place-items: center; }
.views .on { width: 20px; border: 1px solid #c08d2d; border-radius: 3px; background: #ffe27a; }
.zoom { margin: 0 8px 0 9px; }
.round { width: 16px; height: 16px; border: 1px solid #747a84; border-radius: 50%; background: #f5f6f8; font: bold 16px/13px "Noto Sans", sans-serif; display: grid; place-items: center; flex: none; }
.slider { width: 100px; height: 16px; appearance: none; background: linear-gradient(#8a919c, #8a919c) center / 100% 1px no-repeat; }
.slider::-webkit-slider-thumb { appearance: none; width: 9px; height: 13px; clip-path: polygon(0 0, 100% 0, 100% 65%, 50% 100%, 0 65%); background: linear-gradient(45deg, #7b828d 4px, transparent 5px), linear-gradient(-45deg, #7b828d 4px, transparent 5px), #fff; box-shadow: inset 0 0 0 1px #7b828d; }
.grip { align-self: flex-end; margin-left: 5px; }

.mini { position: absolute; left: 392px; top: 235px; z-index: 3; padding: 1px; width: 259px; border: 1px solid #a4a8af; border-radius: 3px; background: #fff; box-shadow: 1px 1px 2px #0002; }
.mini .row:last-child { height: 25px; padding-top: 2px; }
.mini .tb.on { width: 22px; margin-right: 1px; }
.mfont { width: 68px; }
.msize { width: 43px; margin: 0 2px 0 -1px; }
.menu {
  position: absolute; left: 392px; top: 305px; width: 181px; z-index: 3; padding: 1px 0;
  border: 1px solid #a4a8af; border-radius: 3px; box-shadow: 1px 1px 2px #0002;
  background: linear-gradient(#e2e4e7, #e2e4e7) 25px 0 / 1px 100% no-repeat #fff;
}
.menu > button, .mhead { width: 100%; height: 25px; display: grid; grid-template-columns: 29px 1fr; align-items: center; text-align: left; padding-left: 5px; position: relative; }
.menu > .mhead { height: 22px; font-weight: 700; background: linear-gradient(#f0f1f5, #f0f1f5) 27px 0 / 151px 100% no-repeat; }
.menu u { text-underline-offset: 2px; }
.pasteopts { height: 30px; padding: 4px 0 0 30px; }
.pasteopts button { width: 23px; height: 23px; display: grid; place-items: center; background: #fbe3b4; border: 1px solid #e5b66a; }
.menu hr { height: 4px; margin: 0 1px 0 33px; border: 0; background: repeating-linear-gradient(90deg, #c5c8cc 0 3px, transparent 3px 5px) 0 1px / 100% 1px no-repeat; }
.sub::after { content: ""; position: absolute; right: 10px; border: 4px solid transparent; border-left: 4px solid #777; border-right: 0; }
.marked::after { content: ""; position: absolute; left: 27px; top: -2px; width: 121px; height: 28px; border: 3px solid #f93a3a; }
.callout { position: absolute; left: 320px; top: 290px; width: 92px; height: 31px; border: 3px solid #f93a3a; z-index: 4; }
.watermark { position: absolute; right: 14px; bottom: 5px; font: 20px/26px "Noto Sans CJK SC", sans-serif; color: #999; }
```
FILE: grid.js
```js
const letters = 'ABCDEFGHIJKLMNOP'.split('');
const values = { D5: 1, E5: 2, F5: 3, D6: 4, F6: 5, G6: 6, D7: 7, E7: 8 };
const active = { col: 'E', row: 6 };

const head = letters
  .map(c => `<th scope="col"${c === active.col ? ' class="hot"' : ''}>${c}</th>`)
  .join('');

let body = '';
for (let r = 1; r <= 23; r++) {
  const cells = letters.map(c => {
    const cursor = c === active.col && r === active.row;
    return `<td${cursor ? ' class="cursor"' : ''}>${values[c + r] ?? ''}</td>`;
  }).join('');
  body += `<tr><th scope="row" class="stub${r === active.row ? ' hot' : ''}">${r}</th>${cells}</tr>`;
}

document.getElementById('grid').innerHTML =
  `<thead><tr><th class="stub corner"></th>${head}</tr></thead><tbody>${body}</tbody>`;
```
